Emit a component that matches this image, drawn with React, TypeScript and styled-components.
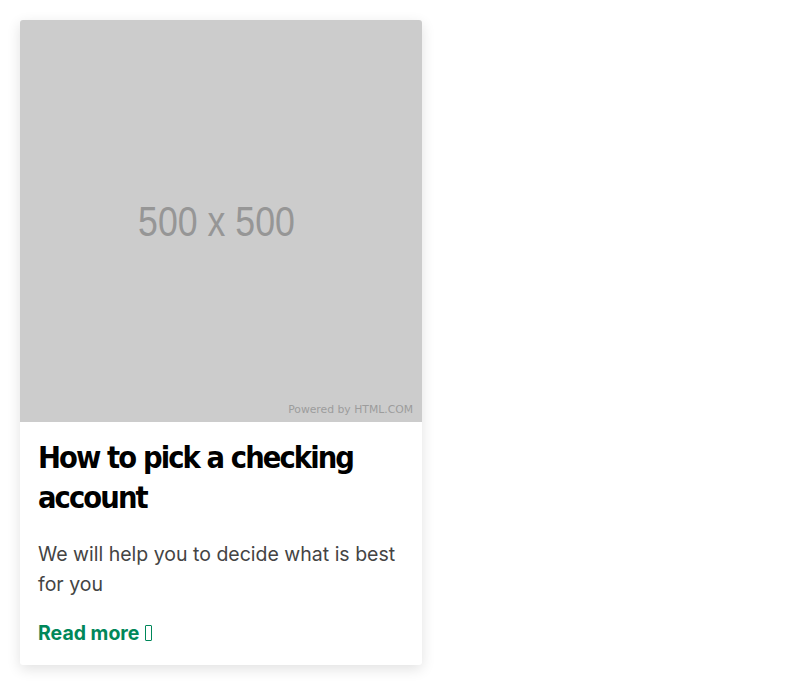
import React from "react";
import styled, { createGlobalStyle } from "styled-components";

const Global = createGlobalStyle`
  html, body { margin: 0; padding: 0; background: #fff; }
  body { font-family: "Liberation Sans", Arial, sans-serif; }
`;

const Page = styled.div`
  padding: 20px;
`;

const Card = styled.article`
  width: 402px;
  background: #fff;
  border-radius: 3px;
  overflow: hidden;
  box-shadow: 0 4px 14px rgba(0, 0, 0, 0.12);
`;

const Placeholder = styled.div`
  position: relative;
  width: 402px;
  height: 402px;
  background: #cccccc;
  display: flex;
  align-items: center;
  justify-content: center;
`;

const SizeLabel = styled.span`
  font-family: "Liberation Sans Narrow", "Liberation Sans", Arial, sans-serif;
  font-size: 43px;
  color: #969696;
  transform: scaleX(0.83);
  margin-left: -9px;
`;

const Powered = styled.span`
  position: absolute;
  right: 9px;
  bottom: 6px;
  font-family: "DejaVu Sans", sans-serif;
  font-size: 10.8px;
  color: #9c9c9c;
`;

const Body = styled.div`
  padding: 16px 18px 20px 18px;
  display: flex;
  flex-direction: column;
`;

const Title = styled.h2`
  margin: 0;
  font-family: "DejaVu Sans Condensed", "DejaVu Sans", sans-serif;
  font-weight: 700;
  font-size: 30.5px;
  line-height: 40px;
  color: #000;
  letter-spacing: -1.9px;
`;

const Text = styled.p`
  margin: 21px 0 0 0;
  font-family: Inter, "Noto Sans", sans-serif;
  font-size: 19.5px;
  line-height: 30px;
  color: #444;
`;

const ReadMore = styled.a`
  margin-top: 22px;
  display: flex;
  align-items: center;
  gap: 6px;
  font-family: Inter, "Noto Sans", sans-serif;
  font-weight: 700;
  font-size: 19.5px;
  line-height: 24px;
  color: #00875a;
  text-decoration: none;
`;

const Tofu = styled.span`
  display: inline-block;
  width: 5px;
  height: 14px;
  border: 1.3px solid #00875a;
  border-radius: 1px;
`;

export default function App() {
  return (
    <Page>
      <Global />
      <Card>
        <Placeholder>
          <SizeLabel>500 x 500</SizeLabel>
          <Powered>Powered by HTML.COM</Powered>
        </Placeholder>
        <Body>
          <Title>How to pick a checking account</Title>
          <Text>We will help you to decide what is best for you</Text>
          <ReadMore href="#">
            Read more
            <Tofu />
          </ReadMore>
        </Body>
      </Card>
    </Page>
  );
}
